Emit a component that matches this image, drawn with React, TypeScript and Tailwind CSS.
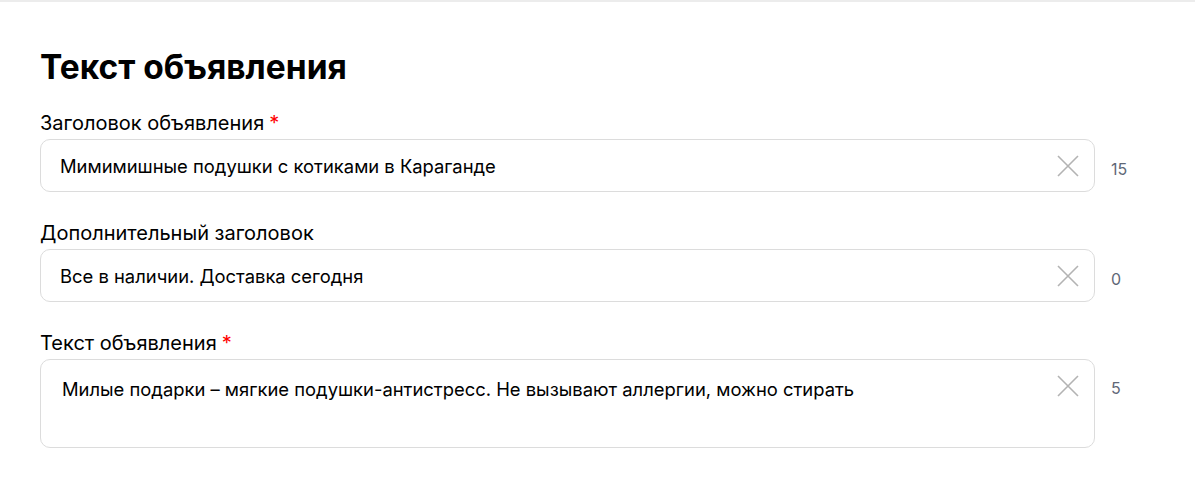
import React from 'react';

type Field = {
  label: string;
  required?: boolean;
  value: string;
  count: number;
  multiline?: boolean;
};

const fields: Field[] = [
  { label: 'Заголовок объявления', required: true, value: 'Мимимишные подушки с котиками в Караганде', count: 15 },
  { label: 'Дополнительный заголовок', value: 'Все в наличии. Доставка сегодня', count: 0 },
  {
    label: 'Текст объявления',
    required: true,
    value: 'Милые подарки – мягкие подушки-антистресс. Не вызывают аллергии, можно стирать',
    count: 5,
    multiline: true,
  },
];

const ClearIcon = () => (
  <svg width="24" height="24" viewBox="0 0 24 24" fill="none" stroke="#b3b3b3" strokeWidth="1.6">
    <path d="M2 2 L22 22 M22 2 L2 22" />
  </svg>
);

const FormField = ({ field }: { field: Field }) => (
  <div className="flex flex-col">
    <div className="text-[20px] leading-[24px] text-black mb-[4px]">
      {field.label}
      {field.required && <span className="text-[#ff0000] ml-[5px]">*</span>}
    </div>
    <div className="flex items-start">
      <div
        className={
          field.multiline
            ? 'flex-1 flex items-start justify-between h-[89px] border border-[#dcdcdc] rounded-[10px] bg-white pl-[21px] pr-[14px] pt-[17px]'
            : 'flex-1 flex items-center justify-between h-[53px] border border-[#dcdcdc] rounded-[10px] bg-white pl-[19px] pr-[14px]'
        }
      >
        <span className="text-[18.4px] leading-[24px] text-black">{field.value}</span>
        <span className={field.multiline ? '-mt-[3px]' : ''}>
          <ClearIcon />
        </span>
      </div>
      <div
        className={
          field.multiline
            ? 'w-[100px] pl-[16px] pt-[17px] text-[16px] text-[#5f6877]'
            : 'w-[100px] pl-[16px] self-center pt-[6px] text-[16px] text-[#5f6877]'
        }
      >
        {field.count}
      </div>
    </div>
  </div>
);

export default function App() {
  return (
    <div
      className="w-[1195px] h-[487px] bg-white border-t-2 border-[#ececec]"
      style={{ fontFamily: 'Inter, "Noto Sans", sans-serif' }}
    >
      <div className="pl-[40px] pt-[45px]">
        <h1 className="text-[33.5px] leading-[40px] font-bold text-black mb-[24px]">Текст объявления</h1>
        <div className="flex flex-col gap-[29px]">
          {fields.map((f) => (
            <FormField key={f.label} field={f} />
          ))}
        </div>
      </div>
    </div>
  );
}
